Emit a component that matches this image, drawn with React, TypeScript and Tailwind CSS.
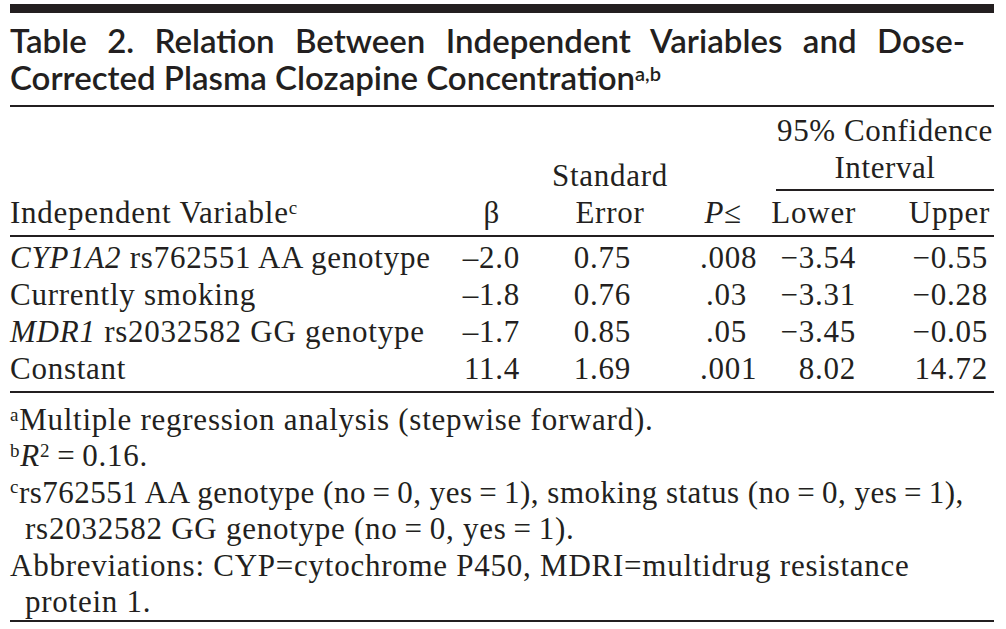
import React from 'react';

const serif = "font-['Liberation_Serif',serif]";
const cols = 'grid grid-cols-[435px_75px_180px_50px_106px_138px]';

const rows = [
  { name: <><i>CYP1A2</i> rs762551 AA genotype</>, b: '–2.0', se: '0.75', p: '.008', lo: '−3.54', hi: '−0.55' },
  { name: <>Currently smoking</>, b: '–1.8', se: '0.76', p: '.03', lo: '−3.31', hi: '−0.28' },
  { name: <><i>MDR1</i> rs2032582 GG genotype</>, b: '–1.7', se: '0.85', p: '.05', lo: '−3.45', hi: '−0.05' },
  { name: <>Constant</>, b: '11.4', se: '1.69', p: '.001', lo: '8.02', hi: '14.72' },
];

const eq = '\u2009=\u2009';

export default function App() {
  return (
    <div className="w-[1006px] h-[629px] bg-white pl-[10px] pr-[12px] pt-[4px] text-[#231f20] overflow-hidden">
      <div className="h-[9px] bg-[#231f20]" />

      {/* Title */}
      <h1 className="mt-[9px] pb-[9px] border-b-2 border-[#231f20] font-['Lato',sans-serif] font-semibold text-[33px] leading-[37px]">
        <div className="w-[955px] [text-align-last:justify]">
          Table 2. Relation Between Independent Variables and Dose-
        </div>
        <div>
          Corrected Plasma Clozapine Concentration
          <sup className="text-[20px] -top-[0.45em]">a,b</sup>
        </div>
      </h1>

      <div className={`${serif} text-[31px] leading-[37px] tracking-[0.75px]`}>
        {/* Header */}
        <div className={`${cols} grid-rows-[auto_auto] pt-[5px] pb-[4px] border-b-2 border-[#231f20]`}>
          <div className="row-span-2 self-end">
            Independent Variable<sup className="text-[19px]">c</sup>
          </div>
          <div className="row-span-2 self-end text-right pr-[20px]">β</div>
          <div className="row-span-2 self-end text-center">
            Standard
            <br />
            Error
          </div>
          <div className="row-span-2 self-end text-right pr-[8px]">
            <i>P</i>≤
          </div>
          <div className="col-span-2 ml-[26px] pb-[3px] border-b-2 border-[#231f20] text-center whitespace-nowrap tracking-[0.6px]">
            95% Confidence
            <br />
            Interval
          </div>
          <div className="col-start-5 pt-[3px] text-right">Lower</div>
          <div className="col-start-6 pt-[3px] text-right pr-[4px]">Upper</div>
        </div>

        {/* Body */}
        <div className="pt-[2px] pb-[4px] border-b-2 border-[#231f20]">
          {rows.map((r, i) => (
            <div key={i} className={cols}>
              <div>{r.name}</div>
              <div className="text-right">{r.b}</div>
              <div className="text-right pr-[69px]">{r.se}</div>
              <div className="text-right pr-[3px]">{r.p}</div>
              <div className="text-right">{r.lo}</div>
              <div className="text-right pr-[6px]">{r.hi}</div>
            </div>
          ))}
        </div>

        {/* Footnotes */}
        <div className="pt-[9px] border-b-2 border-[#231f20] leading-[36.4px]">
          <div>
            <sup className="text-[19px]">a</sup>Multiple regression analysis (stepwise forward).
          </div>
          <div>
            <sup className="text-[19px]">b</sup>
            <i>R</i>
            <sup className="text-[19px]">2</sup>
            {eq}0.16.
          </div>
          <div className="whitespace-nowrap tracking-[0.5px]">
            <sup className="text-[19px]">c</sup>rs762551 AA genotype (no{eq}0, yes{eq}1), smoking status (no{eq}0, yes{eq}1),
          </div>
          <div className="pl-[15px]">rs2032582 GG genotype (no{eq}0, yes{eq}1).</div>
          <div className="whitespace-nowrap">Abbreviations: CYP=cytochrome P450, MDRI=multidrug resistance</div>
          <div className="pl-[15px]">protein 1.</div>
        </div>
      </div>
    </div>
  );
}
